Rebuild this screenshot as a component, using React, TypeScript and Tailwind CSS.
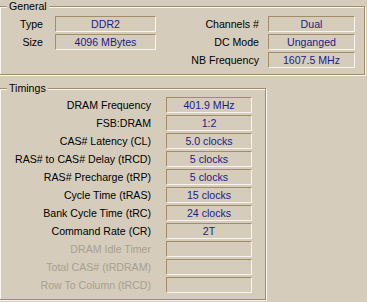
const general = {
  left: [
    ["Type", "DDR2"],
    ["Size", "4096 MBytes"],
  ],
  right: [
    ["Channels #", "Dual"],
    ["DC Mode", "Unganged"],
    ["NB Frequency", "1607.5 MHz"],
  ],
};

const timings: [string, string, boolean][] = [
  ["DRAM Frequency", "401.9 MHz", true],
  ["FSB:DRAM", "1:2", true],
  ["CAS# Latency (CL)", "5.0 clocks", true],
  ["RAS# to CAS# Delay (tRCD)", "5 clocks", true],
  ["RAS# Precharge (tRP)", "5 clocks", true],
  ["Cycle Time (tRAS)", "15 clocks", true],
  ["Bank Cycle Time (tRC)", "24 clocks", true],
  ["Command Rate (CR)", "2T", true],
  ["DRAM Idle Timer", "", false],
  ["Total CAS# (tRDRAM)", "", false],
  ["Row To Column (tRCD)", "", false],
];

function Field({ value, w }: { value: string; w: string }) {
  return (
    <div
      className={`${w} h-[16px] border-t border-l border-b border-r border-t-[#a28d68] border-l-[#a28d68] border-b-[#f8f5ef] border-r-[#f8f5ef] text-center leading-[14px] text-[#1c1c88]`}
    >
      {value}
    </div>
  );
}

function Group({ title, className, children }: { title: string; className: string; children: React.ReactNode }) {
  return (
    <div
      className={`relative ml-[-1px] border border-[#a28d68] shadow-[inset_1px_1px_0_#f8f5ef,1px_1px_0_#f8f5ef] ${className}`}
    >
      <span className="absolute left-[7px] top-[-7px] bg-[#d5ccbb] px-[2px] leading-[13px] text-black">
        {title}
      </span>
      {children}
    </div>
  );
}

export default function App() {
  return (
    <div className="h-[302px] w-[367px] overflow-hidden bg-[#d5ccbb] pt-[6px] font-['Liberation_Sans',Arial,sans-serif] text-[10.6px]">
      <Group title="General" className="h-[69px] w-[366px]">
        <div className="flex items-start pt-[9px]">
          <div className="grid grid-cols-[43px_101px] gap-x-[12px] gap-y-[2px]">
            {general.left.map(([l, v]) => (
              <div key={l} className="contents">
                <div className="h-[16px] text-right leading-[16px] text-black">{l}</div>
                <Field value={v} w="w-[101px]" />
              </div>
            ))}
          </div>
          <div className="ml-auto mr-[9px] grid grid-cols-[auto_87px] gap-x-[9px] gap-y-[2px]">
            {general.right.map(([l, v]) => (
              <div key={l} className="contents">
                <div className="h-[16px] text-right leading-[16px] text-black">{l}</div>
                <Field value={v} w="w-[87px]" />
              </div>
            ))}
          </div>
        </div>
      </Group>
      <Group title="Timings" className="mt-[13px] h-[212px] w-[267px]">
        <div className="grid grid-cols-[151px_86px] gap-x-[15px] gap-y-[2px] pt-[8px]">
          {timings.map(([l, v, on]) => (
            <div key={l} className="contents">
              <div className={`h-[16px] whitespace-nowrap text-right leading-[16px] ${on ? "text-black" : "text-[#a89f8f]"}`}>
                {l}
              </div>
              <Field value={v} w="w-[86px]" />
            </div>
          ))}
        </div>
      </Group>
    </div>
  );
}
